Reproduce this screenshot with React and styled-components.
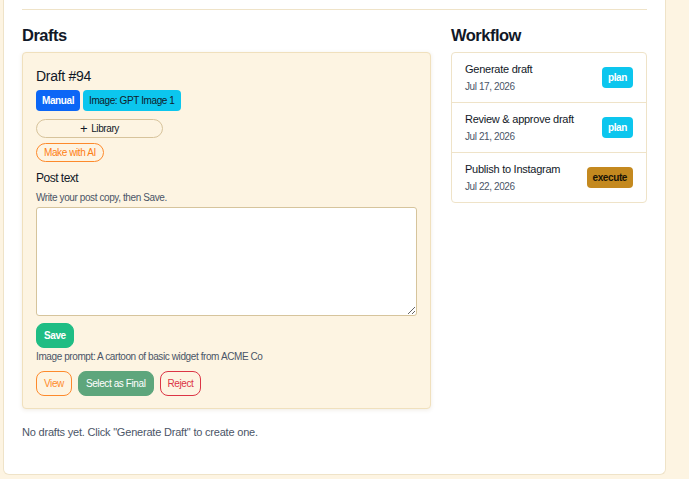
import React from "react"
import styled, { createGlobalStyle } from "styled-components"

const cream = "#fdf4e2"
const tan = "#efe3c8"
const ink = "#111827"
const slate = "#4b5567"
const font = `"Liberation Sans", Arial, sans-serif`

const GlobalStyle = createGlobalStyle`
  html, body {
    margin: 0;
    padding: 0;
    background: ${cream};
    font-family: ${font};
    color: ${ink};
  }
`

const Page = styled.div`
  width: 689px;
  height: 479px;
  overflow: hidden;
  padding: 0 23px 0 3px;
  box-sizing: border-box;
`

const Panel = styled.section`
  background: #fff;
  border: 1px solid ${tan};
  border-top: none;
  border-radius: 0 0 6px 6px;
  height: 475px;
  box-sizing: border-box;
  padding: 9px 18px 0;
`

const Divider = styled.hr`
  border: none;
  border-top: 1px solid ${tan};
  margin: 0 0 16px;
`

const Columns = styled.div`
  display: grid;
  grid-template-columns: 1fr 196px;
  gap: 20px;
`

const Heading = styled.h2`
  font-size: 16.5px;
  letter-spacing: -0.5px;
  font-weight: 700;
  margin: 0 0 8px;
  line-height: 18px;
`

const DraftCard = styled.div`
  background: ${cream};
  border: 1px solid #f0e0bd;
  border-radius: 4px;
  box-shadow: 0 1px 4px rgba(120, 90, 30, 0.12);
  padding: 14px 13px 12px;
`

const DraftTitle = styled.div`
  font-size: 14px;
  letter-spacing: -0.3px;
  line-height: 18px;
  margin-bottom: 5px;
`

const BadgeRow = styled.div`
  display: flex;
  gap: 3px;
  margin-bottom: 8px;
`

const Badge = styled.span`
  display: inline-flex;
  align-items: center;
  height: 21px;
  padding: 0 6px;
  border-radius: 4px;
  font-size: 10px;
  letter-spacing: -0.4px;
  font-weight: ${p => (p.$bold ? 700 : 400)};
  background: ${p => p.$bg};
  color: ${p => p.$fg};
`

const PillButton = styled.button`
  display: flex;
  align-items: center;
  justify-content: center;
  gap: 4px;
  box-sizing: border-box;
  width: ${p => p.$width || "auto"};
  height: 19px;
  padding: 0 7px;
  border-radius: 10px;
  border: 1px solid ${p => p.$border};
  background: transparent;
  color: ${p => p.$color};
  font-family: ${font};
  font-size: 10px;
  letter-spacing: -0.4px;
  margin-bottom: 5px;
`

const Plus = styled.span`
  font-size: 13px;
  line-height: 11px;
  font-weight: 300;
`

const Label = styled.div`
  font-size: 12px;
  letter-spacing: -0.5px;
  line-height: 16px;
  margin: 8px 0 5px;
`

const Hint = styled.div`
  font-size: 10px;
  letter-spacing: -0.4px;
  color: ${slate};
  line-height: 14px;
  margin-bottom: 2px;
`

const TextArea = styled.textarea`
  display: block;
  width: 100%;
  box-sizing: border-box;
  height: 109px;
  border: 1px solid #d6c49c;
  border-radius: 3px;
  background: #fff;
  resize: vertical;
  margin-bottom: 7px;
`

const SolidButton = styled.button`
  height: 25px;
  padding: 0 7px;
  border-radius: 8px;
  border: 1px solid ${p => p.$bg};
  background: ${p => p.$bg};
  color: #fff;
  font-family: ${font};
  font-size: 10px;
  letter-spacing: -0.4px;
  font-weight: ${p => (p.$bold ? 700 : 400)};
`

const OutlineButton = styled.button`
  height: 25px;
  padding: 0 7px;
  border-radius: 8px;
  border: 1px solid ${p => p.$color};
  background: transparent;
  color: ${p => p.$color};
  font-family: ${font};
  font-size: 10px;
  letter-spacing: -0.4px;
`

const Prompt = styled.div`
  font-size: 10px;
  letter-spacing: -0.4px;
  color: ${slate};
  line-height: 14px;
  margin: 2px 0 7px;
`

const ActionRow = styled.div`
  display: flex;
  gap: 6px;
`

const Empty = styled.p`
  font-size: 11px;
  letter-spacing: -0.2px;
  color: ${slate};
  margin: 17px 0 0;
`

const FlowCard = styled.div`
  background: #fff;
  border: 1px solid ${tan};
  border-radius: 4px;
`

const FlowRow = styled.div`
  display: flex;
  align-items: center;
  justify-content: space-between;
  height: 49px;
  padding: 0 13px;
  & + & {
    border-top: 1px solid ${tan};
  }
`

const FlowTitle = styled.div`
  font-size: 11px;
  letter-spacing: -0.25px;
  line-height: 15px;
  margin-bottom: 3px;
`

const FlowDate = styled.div`
  font-size: 10px;
  letter-spacing: -0.4px;
  color: ${slate};
  line-height: 13px;
`

const StepBadge = styled.span`
  display: inline-flex;
  align-items: center;
  height: 21px;
  padding: 0 6px;
  border-radius: 4px;
  font-size: 10px;
  letter-spacing: -0.4px;
  font-weight: 700;
  background: ${p => (p.$kind === "execute" ? "#c4891f" : "#0cc6ee")};
  color: ${p => (p.$kind === "execute" ? "#1a1407" : "#fff")};
`

const steps = [
  ["Generate draft", "Jul 17, 2026", "plan"],
  ["Review & approve draft", "Jul 21, 2026", "plan"],
  ["Publish to Instagram", "Jul 22, 2026", "execute"],
]

export default function App() {
  return (
    <>
      <GlobalStyle />
      <Page>
        <Panel>
          <Divider />
          <Columns>
            <div>
              <Heading>Drafts</Heading>
              <DraftCard>
                <DraftTitle>Draft #94</DraftTitle>
                <BadgeRow>
                  <Badge $bg="#0b66f6" $fg="#fff" $bold>Manual</Badge>
                  <Badge $bg="#0cc6ee" $fg="#10202a">Image: GPT Image 1</Badge>
                </BadgeRow>
                <PillButton $width="127px" $border="#d7c39b" $color={ink}>
                  <Plus>+</Plus> Library
                </PillButton>
                <PillButton $border="#fd8a2c" $color="#fd7e14">Make with AI</PillButton>
                <Label>Post text</Label>
                <Hint>Write your post copy, then Save.</Hint>
                <TextArea />
                <SolidButton $bg="#1fbd84" $bold>Save</SolidButton>
                <Prompt>Image prompt: A cartoon of basic widget from ACME Co</Prompt>
                <ActionRow>
                  <OutlineButton $color="#fd8a2c">View</OutlineButton>
                  <SolidButton $bg="#5ea67c">Select as Final</SolidButton>
                  <OutlineButton $color="#dc3545">Reject</OutlineButton>
                </ActionRow>
              </DraftCard>
              <Empty>No drafts yet. Click "Generate Draft" to create one.</Empty>
            </div>
            <div>
              <Heading>Workflow</Heading>
              <FlowCard>
                {steps.map(([title, date, kind]) => (
                  <FlowRow key={title}>
                    <div>
                      <FlowTitle>{title}</FlowTitle>
                      <FlowDate>{date}</FlowDate>
                    </div>
                    <StepBadge $kind={kind}>{kind}</StepBadge>
                  </FlowRow>
                ))}
              </FlowCard>
            </div>
          </Columns>
        </Panel>
      </Page>
    </>
  )
}
